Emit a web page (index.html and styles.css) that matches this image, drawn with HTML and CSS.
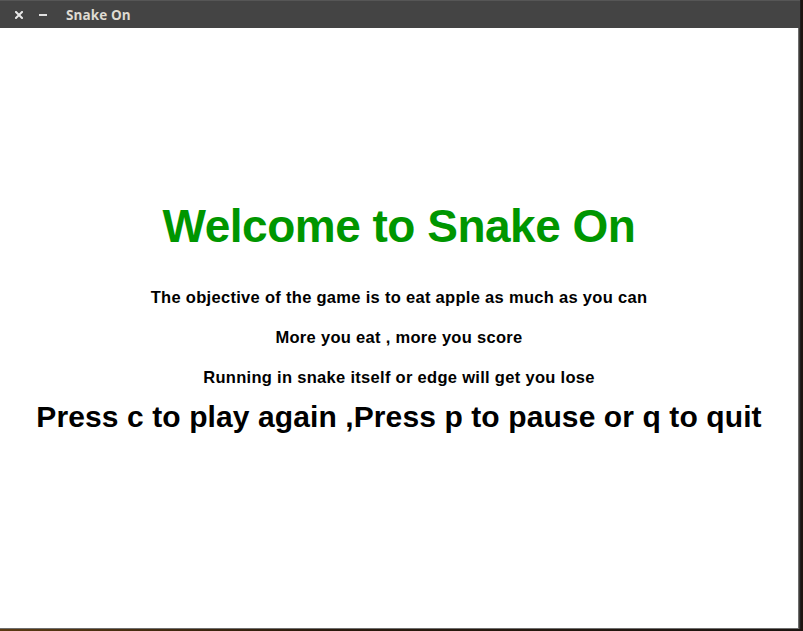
FILE: index.html
```html
<!DOCTYPE html>
<html>
<head>
<meta charset="utf-8">
<link rel="stylesheet" href="styles.css">
<title>Snake On</title>
</head>
<body>
<div class="desktop">
  <div class="window">
    <div class="titlebar">
      <svg class="close" width="8" height="8" viewBox="0 0 8 8"><path d="M1 1L7 7M7 1L1 7" stroke="#e8e8e8" stroke-width="2" stroke-linecap="square"/></svg>
      <span class="min"></span>
      <span class="title">Snake On</span>
    </div>
    <div class="surface">
      <div class="line heading">Welcome to Snake On</div>
      <div class="line small">The objective of the game is to eat apple as much as you can</div>
      <div class="line small">More you eat , more you score</div>
      <div class="line small">Running in snake itself or edge will get you lose</div>
      <div class="line big">Press c to play again ,Press p to pause or q to quit</div>
    </div>
  </div>
</div>
</body>
</html>
```
FILE: styles.css
```css
html, body {
  margin: 0;
  padding: 0;
  width: 803px;
  height: 631px;
  overflow: hidden;
}
.desktop {
  width: 803px;
  height: 631px;
  background: linear-gradient(90deg, #5a3a12 0%, #2a1a0c 40%, #1c1410 100%);
}
.window {
  width: 800px;
  height: 629px;
  background: #3c3b37;
  display: flex;
  flex-direction: column;
  border-right: 1px solid #1e1e1e;
}
.titlebar {
  height: 27px;
  border-top: 1px solid #565656;
  background: #444444;
  display: flex;
  align-items: center;
  font-family: "Open Sans", "DejaVu Sans", sans-serif;
  font-weight: bold;
  color: #dfdbd2;
}
.close {
  margin-left: 15px;
  display: block;
}
.min {
  display: block;
  margin-left: 16px;
  width: 8px;
  height: 2px;
  background: #e0e0e0;
}
.title {
  margin-left: 19px;
  font-size: 13.5px;
  letter-spacing: 0.1px;
}
.surface {
  width: 799px;
  height: 601px;
  background: #ffffff;
  border-right: 1px solid #6e6e6e;
  border-bottom: 1px solid #6e6e6e;
  font-family: "Liberation Sans", Arial, sans-serif;
  font-weight: bold;
  color: #000000;
  text-align: center;
  padding-top: 178px;
  box-sizing: border-box;
}
.line {
  white-space: nowrap;
}
.heading {
  font-size: 46px;
  line-height: 40px;
  letter-spacing: -0.5px;
  color: #009600;
  margin-bottom: 31px;
}
.small {
  font-size: 16.5px;
  line-height: 40px;
  letter-spacing: 0.3px;
}
.big {
  font-size: 30px;
  line-height: 40px;
  letter-spacing: 0.1px;
}
```
